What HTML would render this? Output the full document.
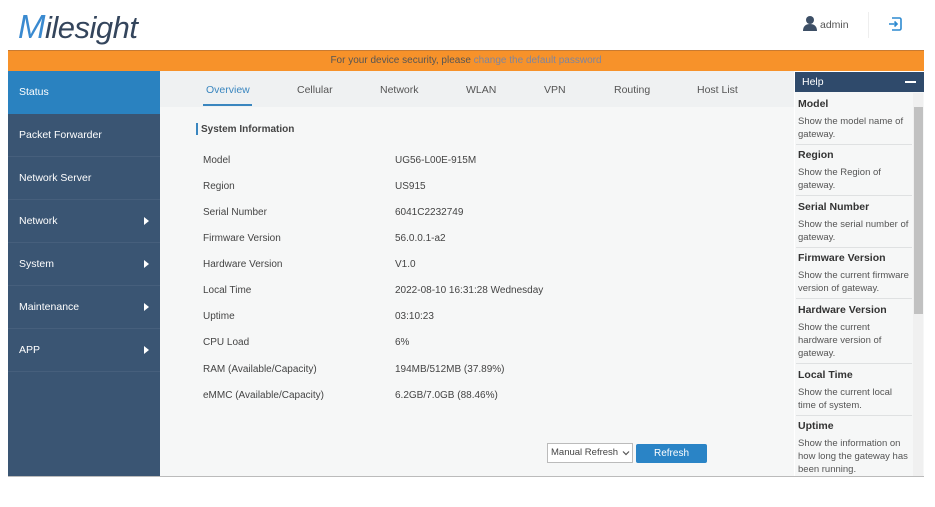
<!DOCTYPE html>
<html><head><meta charset="utf-8"><style>
*{margin:0;padding:0;box-sizing:border-box}
body{width:935px;height:507px;background:#fff;font-family:"Liberation Sans",sans-serif;position:relative;overflow:hidden;color:#444}
.a{position:absolute}
.logo{left:18px;top:8px;font-size:31px;font-style:italic;color:#34455c;letter-spacing:-0.5px;font-weight:normal}
.logo b{color:#3a8ad0;font-weight:normal;font-size:33px}
.bar{left:8px;top:50px;width:916px;height:21px;background:#f7922a;border-top:1px solid #c97a30;font-size:10px;color:#555;text-align:center;line-height:20px}
.bar span{color:#7d86a0}
.side{left:8px;top:71px;width:152px;height:405px;background:#3a5573}
.it{position:absolute;left:0;width:152px;height:43px;color:#fff;font-size:10.5px;line-height:43px;padding-left:11px;border-bottom:1px solid #465f7c}
.it i{position:absolute;right:11px;top:17px;width:0;height:0;border-left:5px solid #fff;border-top:4.5px solid transparent;border-bottom:4.5px solid transparent}
.main{left:160px;top:71px;width:634px;height:405px;background:#f6f7f7}
.tabs{left:160px;top:71px;width:634px;height:36px;background:#eff1f2}
.tab{position:absolute;top:84px;font-size:10.5px;color:#555}
.lbl{position:absolute;left:203px;font-size:10px;color:#444}
.val{position:absolute;left:395px;font-size:10px;color:#444}
.help{left:795px;top:72px;width:129px;height:404px;background:#f6f7f7}
.ht{left:795px;top:72px;width:129px;height:20px;background:#2f4a6b;color:#fff;font-size:10.5px;line-height:20px;padding-left:7px}
.hs{position:absolute;left:798px;width:114px;font-size:9.5px;color:#555;line-height:13px}
.hs b{display:block;font-size:10.5px;color:#333;margin-bottom:4px}
.hl{position:absolute;left:796px;width:116px;height:1px;background:#dfe1e2}
</style></head><body>
<div class="a logo"><b>M</b>ilesight</div>
<svg class="a" style="left:802px;top:15px" width="16" height="16" viewBox="0 0 16 16"><circle cx="8" cy="5" r="4" fill="#3d4f66"/><path d="M1 16c0-5 3-7 7-7s7 2 7 7z" fill="#3d4f66"/></svg>
<div class="a" style="left:820px;top:19px;font-size:10.5px;color:#555">admin</div>
<div class="a" style="left:868px;top:12px;width:1px;height:26px;background:#eee"></div>
<svg class="a" style="left:887px;top:16px" width="16" height="16" viewBox="0 0 16 16" fill="none" stroke="#2d8ad0" stroke-width="1.6"><path d="M5 2H12.5A1.5 1.5 0 0 1 14 3.5V12.5A1.5 1.5 0 0 1 12.5 14H5"/><path d="M2 8H10M7.5 5.5L10 8 7.5 10.5"/></svg>
<div class="a bar">For your device security, please <span>change the default password</span></div>
<div class="a side">
<div class="it" style="top:0;background:#2a82c0;border:none;height:43px">Status</div>
<div class="it" style="top:43px">Packet Forwarder</div>
<div class="it" style="top:86px">Network Server</div>
<div class="it" style="top:129px">Network<i></i></div>
<div class="it" style="top:172px">System<i></i></div>
<div class="it" style="top:215px">Maintenance<i></i></div>
<div class="it" style="top:258px">APP<i></i></div>
</div>
<div class="a main"></div>
<div class="a tabs"></div>
<div class="tab" style="left:206px;color:#3a86bf">Overview</div>
<div class="a" style="left:203px;top:104px;width:49px;height:2px;background:#3a86bf"></div>
<div class="tab" style="left:297px">Cellular</div>
<div class="tab" style="left:380px">Network</div>
<div class="tab" style="left:466px">WLAN</div>
<div class="tab" style="left:544px">VPN</div>
<div class="tab" style="left:614px">Routing</div>
<div class="tab" style="left:697px">Host List</div>
<div class="a" style="left:196px;top:123px;width:2px;height:12px;background:#3a86bf"></div>
<div class="a" style="left:201px;top:124px;font-size:10px;font-weight:bold;color:#444">System Information</div>
<div class="lbl" style="top:155px">Model</div><div class="val" style="top:155px">UG56-L00E-915M</div>
<div class="lbl" style="top:181px">Region</div><div class="val" style="top:181px">US915</div>
<div class="lbl" style="top:207px">Serial Number</div><div class="val" style="top:207px">6041C2232749</div>
<div class="lbl" style="top:233px">Firmware Version</div><div class="val" style="top:233px">56.0.0.1-a2</div>
<div class="lbl" style="top:259px">Hardware Version</div><div class="val" style="top:259px">V1.0</div>
<div class="lbl" style="top:285px">Local Time</div><div class="val" style="top:285px">2022-08-10 16:31:28 Wednesday</div>
<div class="lbl" style="top:311px">Uptime</div><div class="val" style="top:311px">03:10:23</div>
<div class="lbl" style="top:337px">CPU Load</div><div class="val" style="top:337px">6%</div>
<div class="lbl" style="top:364px">RAM (Available/Capacity)</div><div class="val" style="top:364px">194MB/512MB (37.89%)</div>
<div class="lbl" style="top:390px">eMMC (Available/Capacity)</div><div class="val" style="top:390px">6.2GB/7.0GB (88.46%)</div>
<div class="a" style="left:547px;top:443px;width:86px;height:20px;border:1px solid #bbb;background:#fff;font-size:9.5px;line-height:18px;padding-left:3px;color:#444;white-space:nowrap;overflow:hidden">Manual Refresh</div>
<svg class="a" style="left:622px;top:450px" width="8" height="6" viewBox="0 0 8 6"><path d="M1 1.5L4 4.5 7 1.5" fill="none" stroke="#555" stroke-width="1.2"/></svg>
<div class="a" style="left:636px;top:444px;width:71px;height:19px;background:#2a84c6;border-radius:2px;color:#fff;font-size:10px;text-align:center;line-height:19px">Refresh</div>
<div class="a" style="left:8px;top:476px;width:916px;height:1px;background:#bbb"></div>
<div class="a help"></div>
<div class="a ht">Help<span style="position:absolute;right:8px;top:9px;width:11px;height:2px;background:#fff"></span></div>
<div class="a" style="left:913px;top:93px;width:10px;height:383px;background:#f0f0f0"></div>
<div class="a" style="left:914px;top:107px;width:9px;height:207px;background:#c1c1c1"></div>
<div class="hs" style="top:98px"><b>Model</b>Show the model name of gateway.</div>
<div class="hl" style="top:144px"></div>
<div class="hs" style="top:149px"><b>Region</b>Show the Region of gateway.</div>
<div class="hl" style="top:195px"></div>
<div class="hs" style="top:201px"><b>Serial Number</b>Show the serial number of gateway.</div>
<div class="hl" style="top:247px"></div>
<div class="hs" style="top:252px"><b>Firmware Version</b>Show the current firmware version of gateway.</div>
<div class="hl" style="top:298px"></div>
<div class="hs" style="top:304px"><b>Hardware Version</b>Show the current hardware version of gateway.</div>
<div class="hl" style="top:363px"></div>
<div class="hs" style="top:369px"><b>Local Time</b>Show the current local time of system.</div>
<div class="hl" style="top:415px"></div>
<div class="hs" style="top:420px"><b>Uptime</b>Show the information on how long the gateway has been running.</div>
<div class="a" style="left:0;top:477px;width:935px;height:30px;background:#fff"></div>
</body></html>
